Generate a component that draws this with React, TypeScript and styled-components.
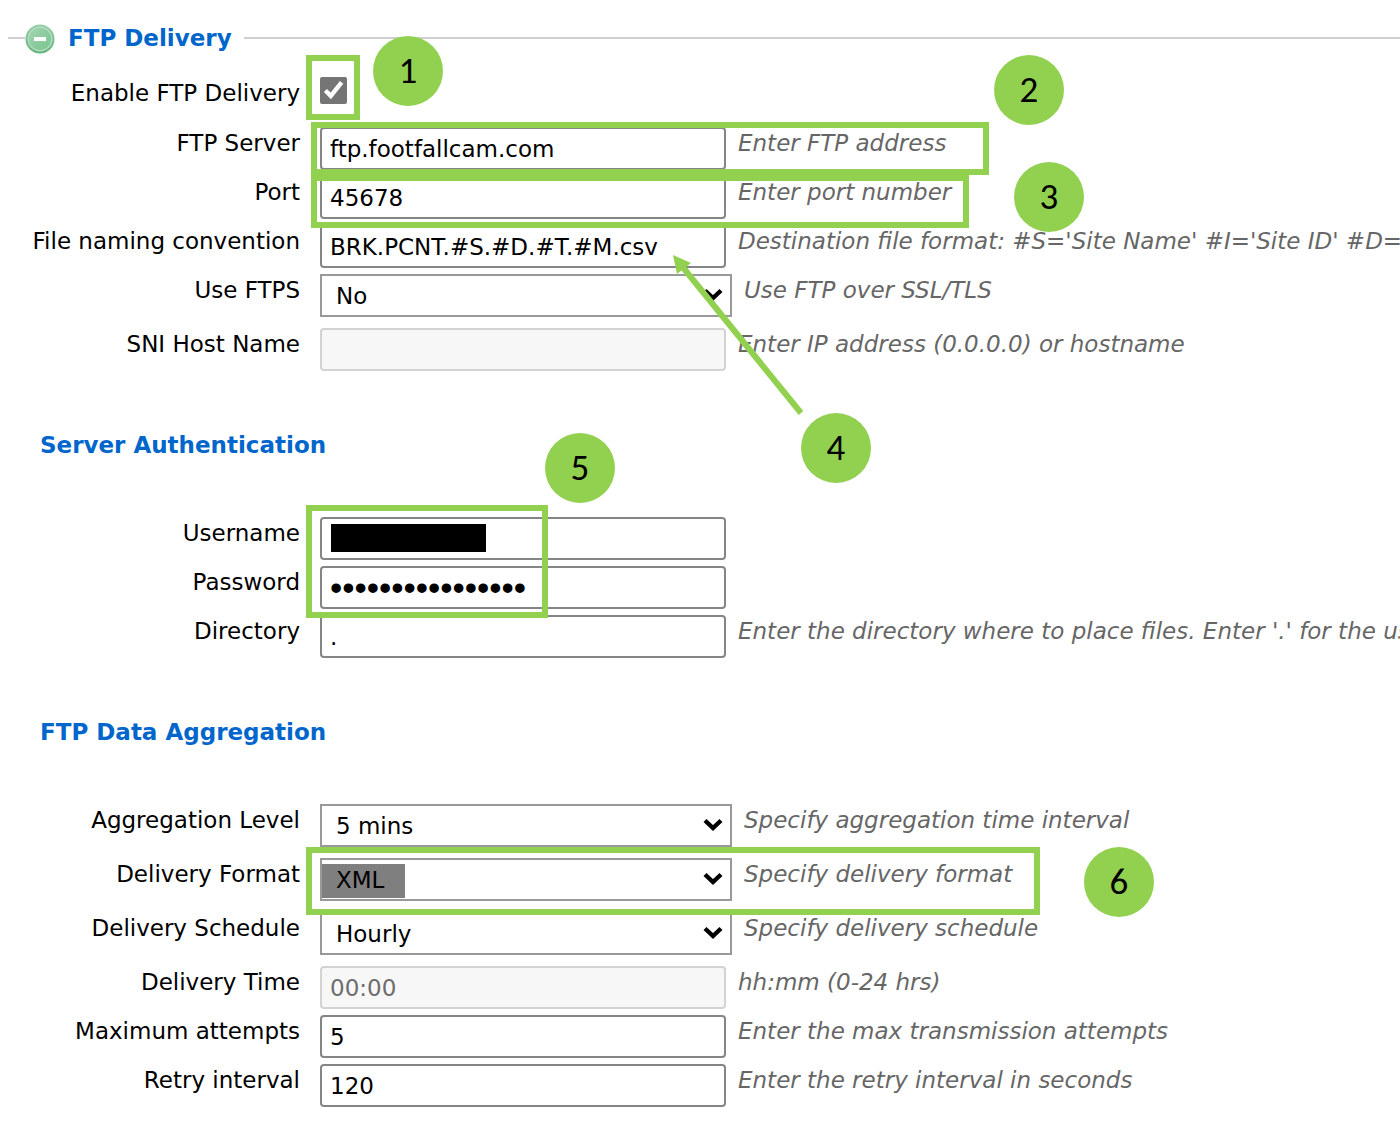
import React, { useState } from "react";
import styled, { createGlobalStyle, css } from "styled-components";

const GREEN = "#92d050";

const GlobalStyle = createGlobalStyle`
  *, *::before, *::after { box-sizing: border-box; }
  body {
    margin: 0;
    background: #fff;
    color: #000;
    font: 23px/32px "DejaVu Sans", Verdana, sans-serif;
  }
`;

const Page = styled.main`
  position: relative;
  padding: 22px 0 8px;
  overflow: hidden;
`;

const Header = styled.header`
  display: flex;
  align-items: center;
  height: 32px;
  padding-left: 8px;
  margin-bottom: 23px;
`;

const Rule = styled.span<{ $short?: boolean }>`
  height: 2px;
  background: #d0d0d0;
  flex: ${(p) => (p.$short ? "0 0 17px" : "1")};
`;

const Toggle = styled.button`
  display: block;
  width: 30px;
  height: 32px;
  margin-right: 13px;
  padding: 2px 0 0;
  border: 0;
  background: none;

  svg {
    display: block;
  }
`;

const Title = styled.h2`
  margin: 0;
  font-size: 23px;
  line-height: 32px;
  font-weight: bold;
  color: #0066cc;
  white-space: nowrap;
`;

const HeaderTitle = styled(Title)`
  margin-right: 12px;
`;

const SectionTitle = styled(Title)`
  margin: 52px 0 56px 40px;
`;

const Row = styled.div<{ $gap?: number }>`
  display: grid;
  grid-template-columns: 300px minmax(0, 1fr);
  column-gap: 20px;
  padding-bottom: ${(p) => p.$gap ?? 6}px;
`;

const Label = styled.label`
  text-align: right;
  white-space: nowrap;
`;

const Field = styled.div`
  display: flex;
  align-items: flex-start;
  gap: 12px;
`;

const Hint = styled.span`
  font-style: italic;
  color: #666;
  white-space: nowrap;
`;

const controlText = css`
  font-family: "DejaVu Sans", Verdana, sans-serif;
  font-size: 23px;
  color: #000;
`;

const TextInput = styled.input`
  ${controlText}
  flex: none;
  width: 406px;
  height: 43px;
  padding: 0 8px;
  border: 2px solid #858585;
  border-radius: 4px;
  background: #fff;
  outline: none;

  &[type="password"] {
    font-family: "Liberation Sans", Arial, sans-serif;
    font-size: 35px;
  }

  &:disabled {
    color: #6d6d6d;
    border-color: #d3d3d3;
    background: #f7f7f7;
  }
`;

const SelectWrap = styled.div`
  position: relative;
  flex: none;
  width: 412px;
  height: 43px;
`;

const SelectBox = styled.select`
  ${controlText}
  appearance: none;
  width: 100%;
  height: 100%;
  padding: 0 40px 0 14px;
  border: 2px solid #999;
  border-radius: 0;
  background: #fff;
  outline: none;
`;

const Chevron = styled.svg`
  position: absolute;
  right: 9px;
  top: 14px;
  pointer-events: none;
`;

const Checkbox = styled.input`
  width: 27px;
  height: 27px;
  margin: 0;
  accent-color: #757575;
`;

const Annotations = styled.div`
  position: absolute;
  inset: 0;
  pointer-events: none;
`;

type Box = { $x: number; $y: number; $w: number; $h: number };

const Highlight = styled.div<Box>`
  position: absolute;
  left: ${(p) => p.$x}px;
  top: ${(p) => p.$y}px;
  width: ${(p) => p.$w}px;
  height: ${(p) => p.$h}px;
  border: 6px solid ${GREEN};
`;

const Mask = styled.div<Box & { $alpha: number }>`
  position: absolute;
  left: ${(p) => p.$x}px;
  top: ${(p) => p.$y}px;
  width: ${(p) => p.$w}px;
  height: ${(p) => p.$h}px;
  background: rgba(0, 0, 0, ${(p) => p.$alpha});
`;

const Marker = styled.span<{ $x: number; $y: number }>`
  position: absolute;
  left: ${(p) => p.$x}px;
  top: ${(p) => p.$y}px;
  display: flex;
  align-items: center;
  justify-content: center;
  width: 70px;
  height: 70px;
  border-radius: 50%;
  background: ${GREEN};
  font-family: Carlito, Calibri, Lato, sans-serif;
  font-size: 37px;
`;

const Arrow = styled.svg`
  position: absolute;
  left: 670px;
  top: 250px;
`;

type TextRowProps = {
  id: string;
  label: string;
  value?: string;
  hint?: string;
  type?: string;
  disabled?: boolean;
};

function TextRow({ id, label, value = "", hint, type = "text", disabled }: TextRowProps) {
  return (
    <Row>
      <Label htmlFor={id}>{label}</Label>
      <Field>
        <TextInput id={id} type={type} defaultValue={value} disabled={disabled} />
        {hint && <Hint>{hint}</Hint>}
      </Field>
    </Row>
  );
}

type SelectRowProps = { id: string; label: string; value: string; hint: string };

function SelectRow({ id, label, value, hint }: SelectRowProps) {
  return (
    <Row $gap={11}>
      <Label htmlFor={id}>{label}</Label>
      <Field>
        <SelectWrap>
          <SelectBox id={id} defaultValue={value}>
            <option>{value}</option>
          </SelectBox>
          <Chevron width="20" height="14" viewBox="0 0 20 14" aria-hidden="true">
            <path d="M2 2.5 L10 10 L18 2.5" fill="none" stroke="#000" strokeWidth="4.4" />
          </Chevron>
        </SelectWrap>
        <Hint>{hint}</Hint>
      </Field>
    </Row>
  );
}

function MinusIcon() {
  return (
    <svg width="30" height="30" viewBox="0 0 30 30" aria-hidden="true">
      <defs>
        <linearGradient id="ring" x1="0" y1="0" x2="0" y2="1">
          <stop offset="0" stopColor="#9bcfae" />
          <stop offset="1" stopColor="#5fb277" />
        </linearGradient>
        <linearGradient id="disc" x1="0" y1="0" x2="1" y2="1">
          <stop offset="0" stopColor="#a6d8b6" />
          <stop offset="0.5" stopColor="#8ccb9d" />
          <stop offset="1" stopColor="#7cc690" />
        </linearGradient>
      </defs>
      <circle cx="15" cy="15" r="14.5" fill="url(#ring)" />
      <circle cx="15" cy="15" r="11.8" fill="url(#disc)" stroke="#b4dcc1" strokeWidth="1.4" />
      <rect x="8.5" y="12.5" width="13" height="5" rx="0.8" fill="#fff" stroke="#7fc492" strokeWidth="0.8" />
    </svg>
  );
}

const markers = [
  { n: 1, x: 373, y: 36 },
  { n: 2, x: 994, y: 55 },
  { n: 3, x: 1014, y: 162 },
  { n: 4, x: 801, y: 413 },
  { n: 5, x: 545, y: 433 },
  { n: 6, x: 1084, y: 847 },
];

export default function App() {
  const [enabled, setEnabled] = useState(true);

  return (
    <Page>
      <GlobalStyle />
      <Header>
        <Rule $short />
        <Toggle type="button" aria-label="Collapse FTP Delivery">
          <MinusIcon />
        </Toggle>
        <HeaderTitle>FTP Delivery</HeaderTitle>
        <Rule />
      </Header>

      <Row $gap={18}>
        <Label htmlFor="enable">Enable FTP Delivery</Label>
        <Field>
          <Checkbox
            id="enable"
            type="checkbox"
            checked={enabled}
            onChange={(e) => setEnabled(e.target.checked)}
          />
        </Field>
      </Row>
      <TextRow id="server" label="FTP Server" value="ftp.footfallcam.com" hint="Enter FTP address" />
      <TextRow id="port" label="Port" value="45678" hint="Enter port number" />
      <TextRow
        id="naming"
        label="File naming convention"
        value="BRK.PCNT.#S.#D.#T.#M.csv"
        hint="Destination file format: #S='Site Name' #I='Site ID' #D="
      />
      <SelectRow id="ftps" label="Use FTPS" value="No" hint="Use FTP over SSL/TLS" />
      <TextRow id="sni" label="SNI Host Name" hint="Enter IP address (0.0.0.0) or hostname" disabled />

      <SectionTitle>Server Authentication</SectionTitle>
      <TextRow id="username" label="Username" />
      <TextRow id="password" label="Password" type="password" value="****************" />
      <TextRow
        id="directory"
        label="Directory"
        value="."
        hint="Enter the directory where to place files. Enter '.' for the us"
      />

      <SectionTitle>FTP Data Aggregation</SectionTitle>
      <SelectRow id="level" label="Aggregation Level" value="5 mins" hint="Specify aggregation time interval" />
      <SelectRow id="format" label="Delivery Format" value="XML" hint="Specify delivery format" />
      <SelectRow id="schedule" label="Delivery Schedule" value="Hourly" hint="Specify delivery schedule" />
      <TextRow id="time" label="Delivery Time" value="00:00" hint="hh:mm (0-24 hrs)" disabled />
      <TextRow id="attempts" label="Maximum attempts" value="5" hint="Enter the max transmission attempts" />
      <TextRow id="retry" label="Retry interval" value="120" hint="Enter the retry interval in seconds" />

      <Annotations>
        <Mask $x={331} $y={524} $w={155} $h={28} $alpha={1} />
        <Mask $x={322} $y={864} $w={83} $h={34} $alpha={0.5} />
        <Highlight $x={306} $y={55} $w={54} $h={65} />
        <Highlight $x={311} $y={122} $w={678} $h={53} />
        <Highlight $x={311} $y={175} $w={658} $h={53} />
        <Highlight $x={306} $y={505} $w={242} $h={113} />
        <Highlight $x={306} $y={847} $w={734} $h={68} />
        <Arrow width="140" height="170" viewBox="670 250 140 170" aria-hidden="true">
          <path d="M681 265 L801 413" stroke={GREEN} strokeWidth="6" fill="none" />
          <path d="M673 255 L691 263 L677 274 Z" fill={GREEN} />
        </Arrow>
        {markers.map((m) => (
          <Marker key={m.n} $x={m.x} $y={m.y}>
            {m.n}
          </Marker>
        ))}
      </Annotations>
    </Page>
  );
}
